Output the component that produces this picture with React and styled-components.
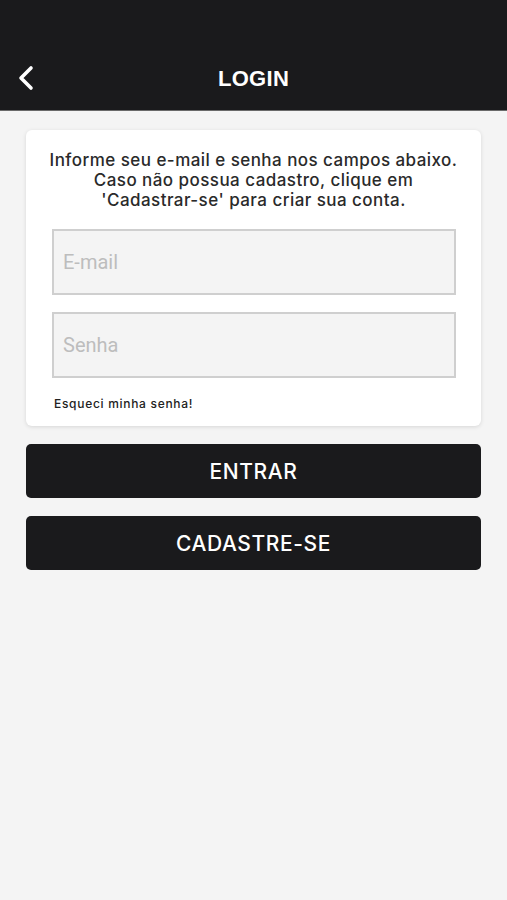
import styled, { createGlobalStyle } from "styled-components";

const Global = createGlobalStyle`
	html, body {
		margin: 0;
		padding: 0;
		background: #f4f4f4;
		font-family: "Liberation Sans", Arial, sans-serif;
	}
`;

const App = () => {
	return (
		<Page>
			<Global />
			<Header>
				<BackButton aria-label="voltar">
					<svg width="18" height="26" viewBox="0 0 18 26" fill="none">
						<path d="M14 3 L4 13 L14 23" stroke="#fff" strokeWidth="3.6" strokeLinecap="round" strokeLinejoin="round" />
					</svg>
				</BackButton>
				<Title>LOGIN</Title>
			</Header>
			<Content>
				<Card>
					<Intro>
						Informe seu e-mail e senha nos campos abaixo.
						<br />
						Caso não possua cadastro, clique em
						<br />
						'Cadastrar-se' para criar sua conta.
					</Intro>
					<Fields>
						<Input type="email" placeholder="E-mail" />
						<Input type="password" placeholder="Senha" />
					</Fields>
					<Forgot>Esqueci minha senha!</Forgot>
				</Card>
				<Button>ENTRAR</Button>
				<Button>CADASTRE-SE</Button>
			</Content>
		</Page>
	);
};

const Page = styled.div`
	min-height: 900px;
	background: #f4f4f4;
`;

const Header = styled.header`
	height: 111px;
	background: #1a1a1c;
	display: flex;
	align-items: flex-end;
	justify-content: center;
	position: relative;
	padding-bottom: 19px;
	box-sizing: border-box;
	border-bottom: 1px solid #6a6a6a;
`;

const BackButton = styled.button`
	position: absolute;
	left: 17px;
	bottom: 19px;
	background: none;
	border: none;
	padding: 0;
	display: flex;
`;

const Title = styled.h1`
	margin: 0;
	color: #fff;
	font-size: 22px;
	font-weight: bold;
	letter-spacing: 0.3px;
	line-height: 24px;
`;

const Content = styled.main`
	padding: 19px 26px;
	display: flex;
	flex-direction: column;
	gap: 18px;
`;

const Card = styled.section`
	background: #fff;
	border-radius: 6px;
	box-shadow: 0 1px 4px rgba(0, 0, 0, 0.12);
	padding: 20px 18px 15px 18px;
`;

const Intro = styled.p`
	margin: 0;
	text-align: center;
	white-space: nowrap;
	color: #2a2a2a;
	font-family: Inter, "Liberation Sans", sans-serif;
	font-weight: 500;
	font-size: 17px;
	line-height: 20px;
	letter-spacing: 0.45px;
`;

const Fields = styled.div`
	margin: 19px 7px 0 8px;
	display: flex;
	flex-direction: column;
	gap: 17px;
`;

const Input = styled.input`
	height: 66px;
	box-sizing: border-box;
	width: 100%;
	background: #f4f4f4;
	border: 2px solid #cfcfcf;
	padding: 0 9px;
	font-family: Roboto, "Liberation Sans", sans-serif;
	font-size: 20px;
	outline: none;
	&::placeholder {
		color: #bdbdbd;
	}
`;

const Forgot = styled.div`
	margin-top: 18px;
	margin-left: 10px;
	font-family: Inter, "Liberation Sans", sans-serif;
	font-weight: 500;
	font-size: 12px;
	letter-spacing: 0.7px;
	color: #222;
`;

const Button = styled.button`
	height: 54px;
	border: none;
	border-radius: 5px;
	background: #1a1a1c;
	color: #fff;
	font-family: Inter, "Liberation Sans", sans-serif;
	font-weight: 500;
	font-size: 21px;
	letter-spacing: 0.6px;
	cursor: pointer;
`;

export default App;
